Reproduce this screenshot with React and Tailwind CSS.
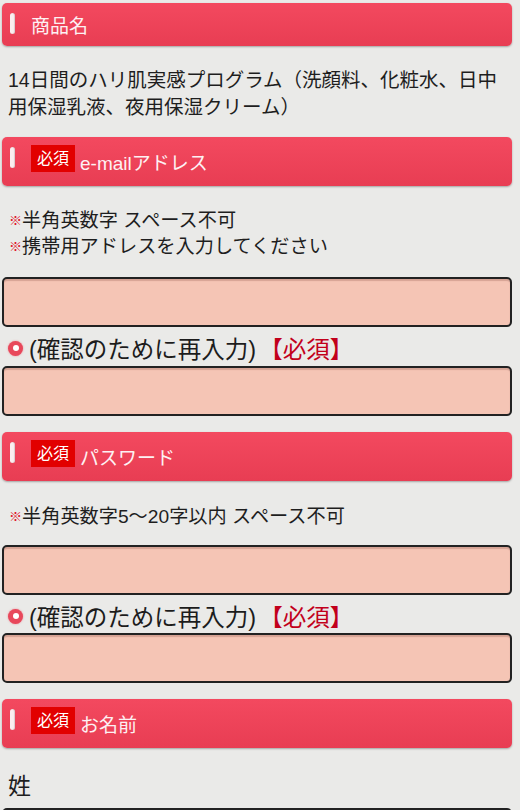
import React from "react";

const FONT = { fontFamily: '"Liberation Sans", "Noto Sans CJK JP", sans-serif' };

function Bar() {
  return <div className="w-[5px] h-[21px] mt-[10px] rounded-full bg-[#fbeef0] shadow-[inset_-1px_0_1px_rgba(0,0,0,0.15)] shrink-0" />;
}

function Header({ title, required, first }) {
  return (
    <div
      className={`flex items-start pl-[8px] rounded-[5px] bg-gradient-to-b from-[#f3495f] to-[#e83d53] shadow-[0_1px_2px_rgba(0,0,0,0.3)] ${first ? "h-[43px]" : "h-[49px]"}`}
    >
      <Bar />
      {required ? (
        <div className="flex items-end ml-[16px] mt-[8px]">
          <span className="bg-[#e20000] text-white text-[16px] leading-[27px] h-[27px] px-[6px]">必須</span>
          <span className="text-[#fdf1f3] text-[19px] leading-[19px] ml-[5px] mb-[-1px]">{title}</span>
        </div>
      ) : (
        <span className="ml-[16px] mt-[14px] text-[#fdf1f3] text-[19px] leading-[19px]">{title}</span>
      )}
    </div>
  );
}

function Input() {
  return (
    <div className="h-[50px] rounded-[5px] border-2 border-[#222222] bg-[#f5c5b5] shadow-[inset_0_2px_1px_rgba(120,60,50,0.25)]" />
  );
}

function Note({ children }) {
  return (
    <div className="flex items-center">
      <span className="text-[#e0101e] text-[13px] font-bold shrink-0">※</span>
      <span>{children}</span>
    </div>
  );
}

function Confirm({ className }) {
  return (
    <div className={`flex items-center h-[30px] pl-[6px] text-[23.5px] leading-[30px] ${className}`}>
      <span className="w-[15px] h-[15px] rounded-full bg-[#e8485b] flex items-center justify-center shrink-0 mb-[4px] shadow-[0_0_2px_rgba(232,72,91,0.6)]">
        <span className="w-[6px] h-[6px] rounded-full bg-white" />
      </span>
      <span className="ml-[6px] text-[#1c1c1c]">(確認のために再入力)</span>
      <span className="ml-[3px] text-[#c2001b]">【必須】</span>
    </div>
  );
}

export default function App() {
  return (
    <div className="w-[520px] h-[810px] overflow-hidden bg-[#eaeae8] text-[#1e1e1e]" style={FONT}>
      <div className="pl-[2px] pr-[8px] pt-[3px]">
        <Header title="商品名" first />
        <div className="mt-[21px] pl-[6px] text-[19.5px] leading-[27px]">
          14日間のハリ肌実感プログラム（洗顔料、化粧水、日中
          <br />
          用保湿乳液、夜用保湿クリーム）
        </div>
        <div className="mt-[16px]">
          <Header title="e-mailアドレス" required />
        </div>
        <div className="mt-[22px] pl-[7px] text-[19.2px] leading-[26px]">
          <Note>半角英数字 スペース不可</Note>
          <Note>携帯用アドレスを入力してください</Note>
        </div>
        <div className="mt-[17px]">
          <Input />
        </div>
        <Confirm className="mt-[8px]" />
        <div className="mt-[1px]">
          <Input />
        </div>
        <div className="mt-[16px]">
          <Header title="パスワード" required />
        </div>
        <div className="mt-[23px] pl-[7px] text-[19.2px] leading-[26px]">
          <Note>半角英数字5～20字以内 スペース不可</Note>
        </div>
        <div className="mt-[15px]">
          <Input />
        </div>
        <Confirm className="mt-[8px]" />
        <div className="mt-[0px]">
          <Input />
        </div>
        <div className="mt-[16px]">
          <Header title="お名前" required />
        </div>
        <div className="mt-[23px] pl-[6px] text-[23px] leading-[30px]">姓</div>
        <div className="mt-[7px]">
          <Input />
        </div>
      </div>
    </div>
  );
}
